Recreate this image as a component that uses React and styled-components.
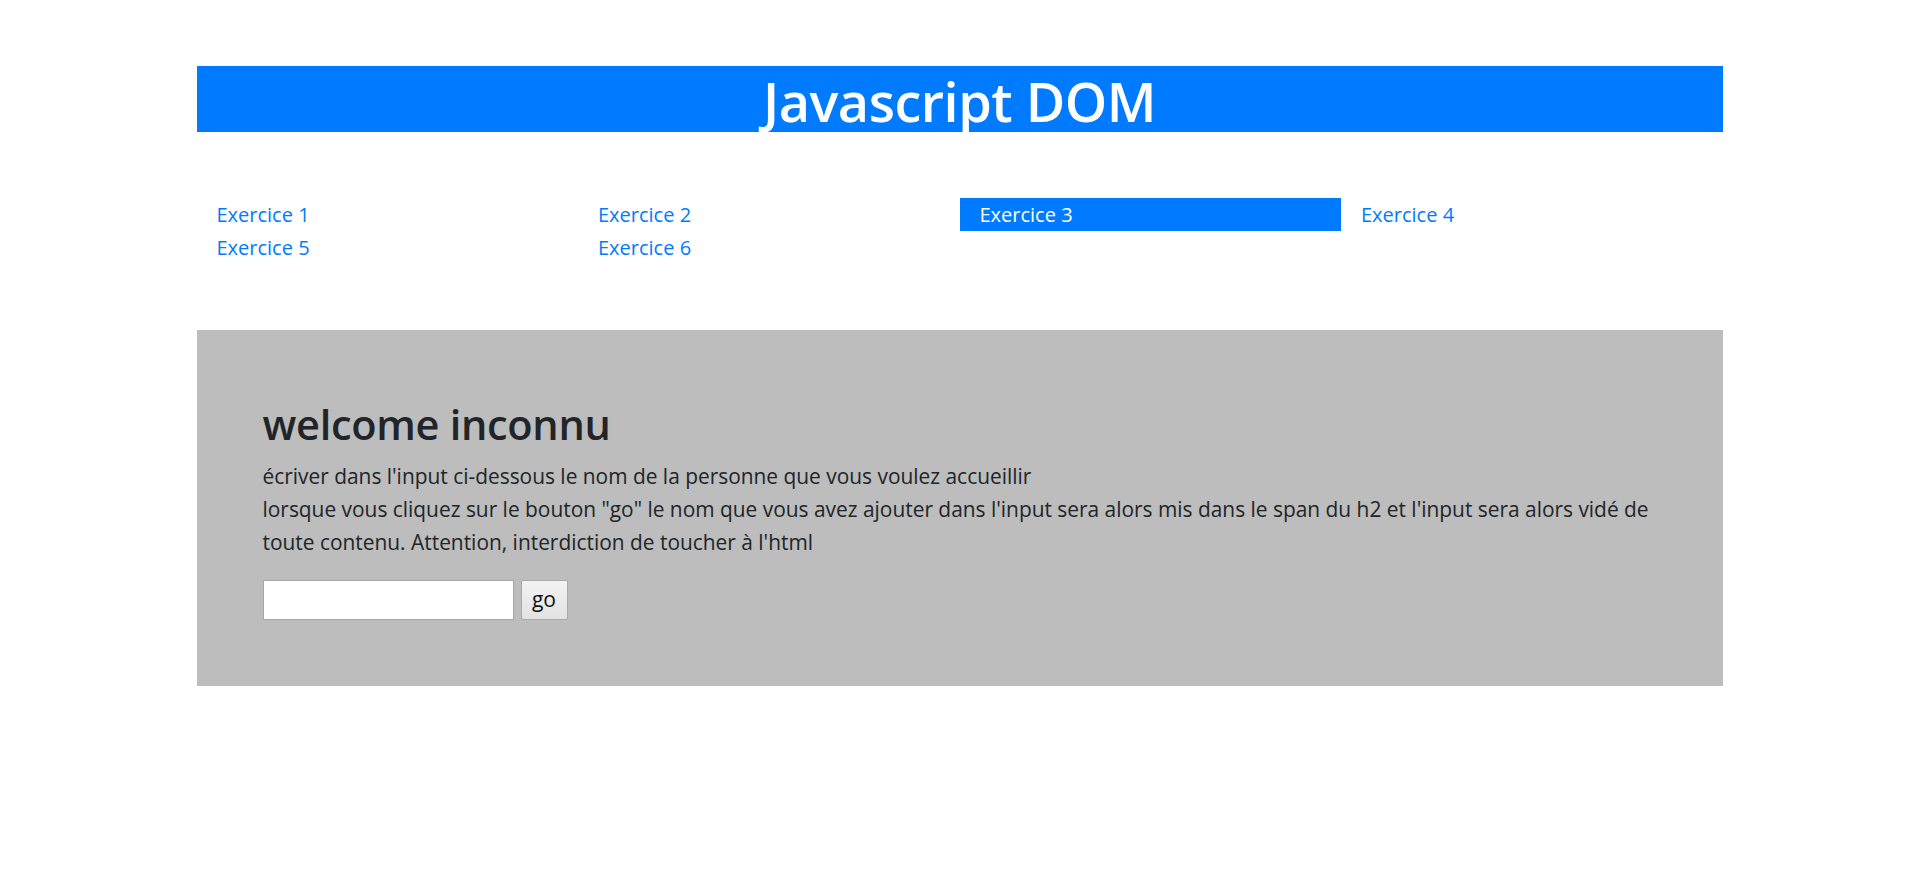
import React, { useState } from 'react';
import styled, { createGlobalStyle } from 'styled-components';

const GlobalStyle = createGlobalStyle`
  body {
    margin: 0;
    background: #fff;
    font-family: "Open Sans", "Noto Sans", sans-serif;
    color: #212529;
  }
`;

const exercices = [1, 2, 3, 4, 5, 6];

const App = () => {
  const [name, setName] = useState('inconnu');
  const [value, setValue] = useState('');

  const handleGo = () => {
    if (value.trim()) setName(value);
    setValue('');
  };

  return (
    <>
      <GlobalStyle />
      <Page>
        <Wrapper>
          <Header>Javascript DOM</Header>
          <Nav>
            {exercices.map((n) => (
              <NavLink key={n} href="#" $active={n === 3}>
                Exercice {n}
              </NavLink>
            ))}
          </Nav>
          <Exercise>
            <Title>welcome <span>{name}</span></Title>
            <Text>
              écriver dans l'input ci-dessous le nom de la personne que vous voulez accueillir
              <br />
              lorsque vous cliquez sur le bouton "go" le nom que vous avez ajouter dans l'input sera alors mis dans le span du h2 et l'input sera alors vidé de toute contenu. Attention, interdiction de toucher à l'html
            </Text>
            <Form>
              <Input value={value} onChange={(e) => setValue(e.target.value)} />
              <GoButton onClick={handleGo}>go</GoButton>
            </Form>
          </Exercise>
        </Wrapper>
      </Page>
    </>
  );
};

const Page = styled.div`
  padding: 66px 0 120px;
`;

const Wrapper = styled.div`
  width: 1526px;
  margin: 0 auto;
`;

const Header = styled.h1`
  margin: 0;
  height: 66px;
  background-color: #007bff;
  color: #fff;
  text-align: center;
  font-size: 54px;
  font-weight: 600;
  line-height: 70px;
  letter-spacing: -0.5px;
`;

const Nav = styled.nav`
  display: grid;
  grid-template-columns: repeat(4, 1fr);
  grid-auto-rows: 33px;
  margin: 66px 0;
`;

const NavLink = styled.a`
  display: block;
  padding: 0 20px;
  font-size: 20px;
  line-height: 34px;
  text-decoration: none;
  color: ${(p) => (p.$active ? '#fff' : '#007bff')};
  background-color: ${(p) => (p.$active ? '#007bff' : 'transparent')};
`;

const Exercise = styled.section`
  background-color: #bcbdbc;
  padding: 69px 66px 66px;
`;

const Title = styled.h2`
  margin: 0 0 11px;
  font-size: 41.5px;
  font-weight: 600;
  line-height: 50px;
  letter-spacing: -0.3px;
  color: #212529;
`;

const Text = styled.p`
  margin: 0 0 21px;
  font-size: 20.9px;
  line-height: 33px;
  color: #212529;
`;

const Form = styled.div`
  display: flex;
  gap: 7px;
`;

const Input = styled.input`
  box-sizing: border-box;
  width: 251px;
  height: 40px;
  border: 1px solid #a6a6a6;
  background: #fff;
  padding: 0 6px;
  font-size: 20px;
  font-family: inherit;
  outline: none;
`;

const GoButton = styled.button`
  box-sizing: border-box;
  width: 47px;
  height: 40px;
  border: 1px solid #a9a9a9;
  border-radius: 2px;
  background: linear-gradient(#f3f3f3, #e2e2e2);
  font-family: inherit;
  font-size: 21px;
  color: #111;
  padding: 0 0 2px;
  cursor: pointer;
`;

export default App;
